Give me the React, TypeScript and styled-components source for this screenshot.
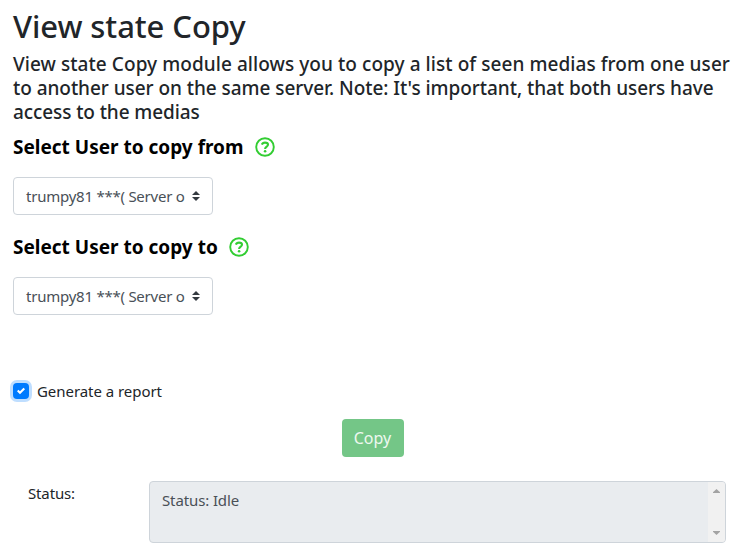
import React from "react";
import styled, { createGlobalStyle } from "styled-components";

const Global = createGlobalStyle`
  *, *::before, *::after { box-sizing: border-box; }
  body {
    margin: 0;
    background: #fff;
    color: #212529;
    font-family: "Segoe UI", "Noto Sans", sans-serif;
    font-size: 15px;
    line-height: 24px;
    overflow: hidden;
  }
`;

const Page = styled.main`
  display: flex;
  flex-direction: column;
  width: 737px;
  height: 551px;
  padding: 7px 11px 0 13px;
`;

const Title = styled.h1`
  margin: 0 0 7px;
  font-size: 31px;
  font-weight: 500;
  line-height: 38px;
  white-space: nowrap;
`;

const Intro = styled.p`
  margin: 0;
  font-size: 19px;
  font-weight: 500;
  line-height: 24px;
  white-space: nowrap;
`;

const Line = styled.span<{ $spacing: number }>`
  display: block;
  letter-spacing: ${(p) => p.$spacing}px;
`;

const Field = styled.section`
  display: flex;
  flex-direction: column;
  align-items: flex-start;
  height: 100px;
  padding-top: 11px;
`;

const FieldHeading = styled.h2`
  display: flex;
  align-items: center;
  gap: 11px;
  margin: 0 0 18px;
  color: #000;
  font-size: 19px;
  font-weight: 700;
  line-height: 24px;
  white-space: nowrap;
`;

const HelpSvg = styled.svg`
  display: block;
  width: 20px;
  height: 20px;
`;

const Select = styled.button`
  display: flex;
  align-items: center;
  justify-content: space-between;
  width: 200px;
  height: 38px;
  padding: 0 12px;
  border: 1px solid #ced4da;
  border-radius: 4px;
  background: #fff;
  color: #495057;
  font: inherit;
`;

const SelectValue = styled.span`
  width: 160px;
  letter-spacing: -0.24px;
  text-align: left;
  white-space: nowrap;
`;

const Arrows = styled.svg`
  flex: none;
  width: 8px;
  height: 10px;
`;

const CheckRow = styled.label`
  display: flex;
  align-items: center;
  gap: 8px;
  height: 24px;
  margin-top: 55px;
`;

const Box = styled.span`
  display: grid;
  place-items: center;
  width: 16px;
  height: 16px;
  border-radius: 4px;
  background: #007bff;
  box-shadow: 0 0 0 3px #bfdeff;
`;

const CopyButton = styled.button`
  align-self: center;
  width: 62px;
  height: 38px;
  margin: 16px 0 0 6px;
  padding: 0;
  border: 0;
  border-radius: 4px;
  background: #74c687;
  color: #eef8f0;
  font: inherit;
  font-size: 16px;
`;

const StatusRow = styled.div`
  display: grid;
  grid-template-columns: 121px 577px;
  margin-top: 24px;
  padding-left: 15px;
`;

const StatusOutput = styled.div`
  display: flex;
  justify-content: space-between;
  height: 62px;
  border: 1px solid #ced4da;
  border-radius: 4px;
  background: #e9ecef;
  color: #495057;
  overflow: hidden;
`;

const StatusText = styled.span`
  padding: 6px 12px;
  letter-spacing: -0.12px;
`;

const ScrollTrack = styled.div`
  display: flex;
  flex-direction: column;
  align-items: center;
  justify-content: space-between;
  width: 17px;
  padding: 7px 0;
  background: #f1f1f1;
`;

const ScrollArrow = styled.svg`
  width: 7px;
  height: 4px;
`;

const HelpIcon = () => (
  <HelpSvg viewBox="0 0 20 20" fill="none" stroke="#32cd32">
    <circle cx="10" cy="10" r="8.8" strokeWidth="1.9" />
    <path d="M6.9 7.7C7.4 6.2 8.5 5.6 10 5.6C11.8 5.6 13 6.5 13 7.8C13 9.6 10.1 9.6 10.1 11.9" strokeWidth="2.1" />
    <circle cx="10.1" cy="14.2" r="1.3" fill="#32cd32" stroke="none" />
  </HelpSvg>
);

const UserField = ({ title, spacing }: { title: string; spacing: number }) => (
  <Field>
    <FieldHeading>
      <Line $spacing={spacing}>{title}</Line>
      <HelpIcon />
    </FieldHeading>
    <Select>
      <SelectValue>trumpy81 ***( Server o</SelectValue>
      <Arrows viewBox="0 0 4 5">
        <path fill="#343a40" d="M2 0L0 2h4zm0 5L0 3h4z" />
      </Arrows>
    </Select>
  </Field>
);

export default function App() {
  return (
    <>
      <Global />
      <Page>
        <Title><Line $spacing={-0.07}>View state Copy</Line></Title>
        <Intro>
          <Line $spacing={0.065}>View state Copy module allows you to copy a list of seen medias from one user</Line>
          <Line $spacing={-0.055}>to another user on the same server. Note: It's important, that both users have</Line>
          <Line $spacing={-0.1}>access to the medias</Line>
        </Intro>
        <UserField title="Select User to copy from" spacing={0} />
        <UserField title="Select User to copy to" spacing={0} />
        <CheckRow>
          <Box>
            <svg width="8" height="8" viewBox="0 0 8 8">
              <path fill="#fff" d="M6.564.75l-3.59 3.612-1.538-1.55L0 4.26 2.974 7.25 8 2.193z" />
            </svg>
          </Box>
          <Line $spacing={-0.05}>Generate a report</Line>
        </CheckRow>
        <CopyButton>Copy</CopyButton>
        <StatusRow>
          <Line $spacing={-0.14}>Status:</Line>
          <StatusOutput>
            <StatusText>Status: Idle</StatusText>
            <ScrollTrack>
              <ScrollArrow viewBox="0 0 7 4"><path fill="#a3a3a3" d="M0 4V3.2L3.5 0L7 3.2V4z" /></ScrollArrow>
              <ScrollArrow viewBox="0 0 7 4"><path fill="#a3a3a3" d="M0 0V.8L3.5 4L7 .8V0z" /></ScrollArrow>
            </ScrollTrack>
          </StatusOutput>
        </StatusRow>
      </Page>
    </>
  );
}
